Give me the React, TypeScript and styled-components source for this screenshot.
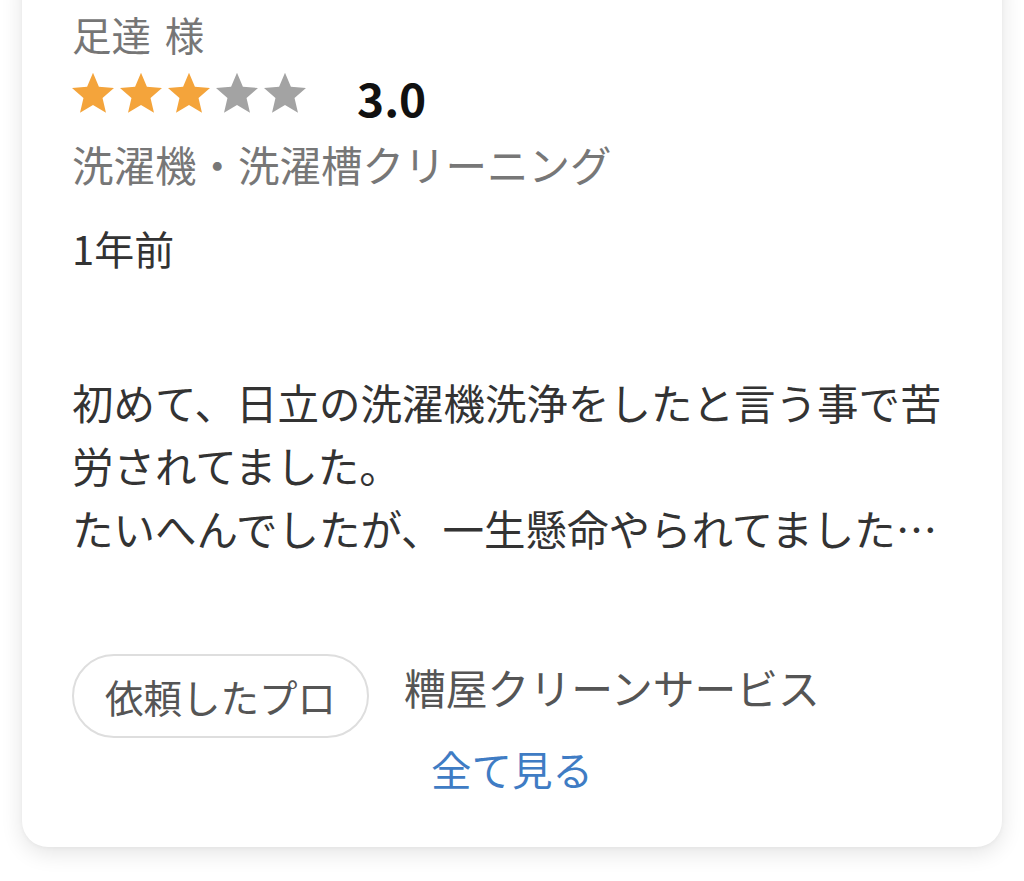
import React from "react";
import styled, { createGlobalStyle } from "styled-components";

const GlobalStyle = createGlobalStyle`
  html, body {
    margin: 0;
    padding: 0;
    background: #ffffff;
  }
  body {
    font-family: "Noto Sans CJK JP", "Noto Sans", sans-serif;
    overflow: hidden;
  }
`;

const Page = styled.div`
  padding: 0 22px 40px 22px;
`;

const Card = styled.article`
  margin-top: -40px;
  padding: 50px 50px 52px 50px;
  background: #ffffff;
  border-radius: 26px;
  box-shadow: 0 6px 22px rgba(0, 0, 0, 0.11), 0 1px 4px rgba(0, 0, 0, 0.04);
`;

const Name = styled.div`
  font-size: 39.5px;
  line-height: 48px;
  color: #767676;
  word-spacing: 5px;
`;

const RatingRow = styled.div`
  margin-top: 10px;
  height: 50px;
  display: flex;
  align-items: center;
`;

const Stars = styled.div`
  display: flex;
  gap: 6px;
`;

const Score = styled.span`
  margin-left: 51px;
  padding-top: 8px;
  font-size: 46px;
  line-height: 50px;
  font-weight: 700;
  color: #111111;
`;

const Category = styled.div`
  margin-top: 18px;
  font-size: 41.5px;
  line-height: 56px;
  color: #777777;
  white-space: nowrap;
`;

const Ago = styled.div`
  margin-top: 30px;
  font-size: 40px;
  line-height: 52px;
  color: #333333;
`;

const Body = styled.p`
  margin: 97px 0 0 0;
  font-size: 41.5px;
  line-height: 63px;
  color: #333333;
  white-space: pre-line;
`;

const Footer = styled.div`
  margin-top: 94px;
  display: flex;
  align-items: flex-start;
  gap: 35px;
`;

const Pill = styled.span`
  box-sizing: border-box;
  height: 84px;
  padding: 0 31px;
  display: inline-flex;
  align-items: center;
  border: 2px solid #dedede;
  border-radius: 42px;
  font-size: 38.5px;
  color: #555555;
  white-space: nowrap;
`;

const ProName = styled.span`
  margin-top: 3px;
  font-size: 41.8px;
  line-height: 60px;
  color: #555555;
  white-space: nowrap;
`;

const SeeAll = styled.a`
  display: block;
  margin-top: 5px;
  text-align: center;
  font-size: 40.5px;
  line-height: 52px;
  color: #3f7cc4;
  text-decoration: none;
`;

const StarIcon: React.FC<{ filled: boolean }> = ({ filled }) => (
  <svg width="42" height="42" viewBox="2 1.6 20 20" aria-hidden="true">
    <path
      d="M12 17.27L18.18 21l-1.64-7.03L22 9.24l-7.19-.61L12 2 9.19 8.63 2 9.24l5.46 4.73L5.82 21z"
      fill={filled ? "#f4a43b" : "#a3a3a3"}
    />
  </svg>
);

export default function App() {
  const rating = 3;
  return (
    <>
      <GlobalStyle />
      <Page>
        <Card>
          <Name>足達 様</Name>
          <RatingRow>
            <Stars>
              {[1, 2, 3, 4, 5].map((i) => (
                <StarIcon key={i} filled={i <= rating} />
              ))}
            </Stars>
            <Score>3.0</Score>
          </RatingRow>
          <Category>洗濯機・洗濯槽クリーニング</Category>
          <Ago>1年前</Ago>
          <Body>
            {"初めて、日立の洗濯機洗浄をしたと言う事で苦労されてました。\nたいへんでしたが、一生懸命やられてました…"}
          </Body>
          <Footer>
            <Pill>依頼したプロ</Pill>
            <ProName>糟屋クリーンサービス</ProName>
          </Footer>
          <SeeAll href="#">全て見る</SeeAll>
        </Card>
      </Page>
    </>
  );
}
